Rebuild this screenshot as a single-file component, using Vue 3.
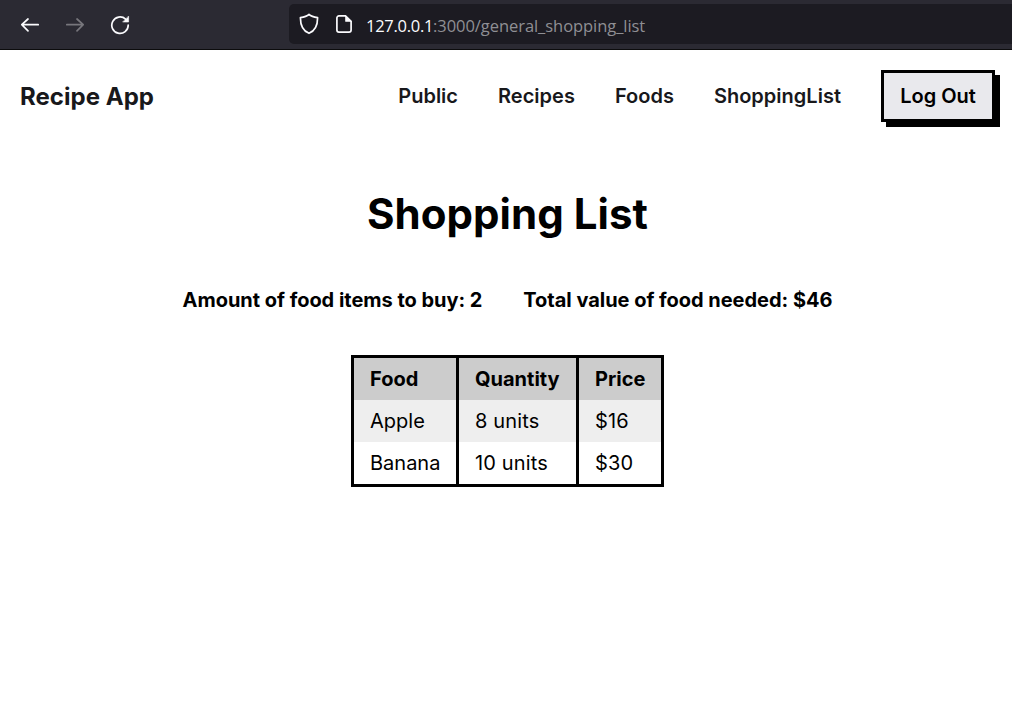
<script setup>
const links = ['Public', 'Recipes', 'Foods', 'ShoppingList']
const items = [
  { food: 'Apple', quantity: '8 units', price: '$16' },
  { food: 'Banana', quantity: '10 units', price: '$30' },
]
</script>

<template>
  <div class="window">
    <div class="toolbar">
      <div class="controls">
        <svg width="20" height="20" viewBox="0 0 20 20" class="icon">
          <path d="M18.2 9.7H2M8 4L1.8 9.7L8 15.8" />
        </svg>
        <svg width="20" height="20" viewBox="0 0 20 20" class="icon dim">
          <path d="M1.8 9.7H18M12 4L18.2 9.7L12 15.8" />
        </svg>
        <svg width="20" height="20" viewBox="0 0 20 20" class="icon">
          <path d="M15.6 4.2A8.2 8.2 0 1 0 18.2 10" />
          <path class="solid" d="M18.6 1.4V7H13Z" />
        </svg>
      </div>
      <div class="address">
        <svg width="20" height="22" viewBox="0 0 20 22" class="icon shield">
          <path d="M10 1.5C7.5 3.7 4.5 4.2 1.4 4.7C1.4 11.4 3.3 17.6 10 20.3C16.7 17.6 18.6 11.4 18.6 4.7C15.5 4.2 12.5 3.7 10 1.5Z" />
        </svg>
        <svg width="16" height="18" viewBox="0 0 16 18" class="icon page">
          <path d="M9.5 .9H3A2.1 2.1 0 0 0 .9 3V15A2.1 2.1 0 0 0 3 17.1H13A2.1 2.1 0 0 0 15.1 15V6.3Z" />
          <path class="solid" d="M9.5 .9V6.4H15.1Z" />
        </svg>
        <span class="url"><b>127.0.0.1</b>:3000/general_shopping_list</span>
      </div>
    </div>

    <header>
      <div class="brand">Recipe App</div>
      <nav>
        <a v-for="link in links" :key="link">{{ link }}</a>
        <button>Log Out</button>
      </nav>
    </header>

    <main>
      <h1>Shopping List</h1>
      <div class="summary">
        <span>Amount of food items to buy: 2</span>
        <span>Total value of food needed: $46</span>
      </div>
      <table>
        <thead>
          <tr><th>Food</th><th>Quantity</th><th>Price</th></tr>
        </thead>
        <tbody>
          <tr v-for="item in items" :key="item.food">
            <td>{{ item.food }}</td><td>{{ item.quantity }}</td><td>{{ item.price }}</td>
          </tr>
        </tbody>
      </table>
    </main>
  </div>
</template>

<style>
body { margin: 0; background: #fff; overflow: hidden; }
</style>

<style scoped>
.window { height: 705px; overflow: hidden; font: 20px/26px Inter, sans-serif; color: #000; }
.toolbar { box-sizing: border-box; height: 50px; display: flex; background: #2b2a33; border-bottom: 1px solid #0c0c0d; }
.controls { width: 289px; display: flex; gap: 25px; padding: 15px 0 0 20px; box-sizing: border-box; }
.icon { flex: none; fill: none; stroke: #fbfbfe; stroke-width: 1.7; stroke-linecap: round; stroke-linejoin: round; }
.dim { stroke: #77767c; }
.solid { fill: #fbfbfe; stroke-width: .6; }
.address { flex: 1; height: 40px; margin-top: 4px; display: flex; align-items: center; background: #1c1b22; border-radius: 5px 0 0 5px; }
.shield { margin-left: 10px; }
.page { margin-left: 17px; }
.url { margin: 3px 0 0 14px; font: 16.5px/24px "Open Sans", "Noto Sans", sans-serif; letter-spacing: -0.06px; color: #8f8f94; white-space: nowrap; }
.url b { font-weight: 400; color: #fbfbfe; letter-spacing: -0.28px; }
header { height: 92px; display: flex; align-items: center; justify-content: space-between; padding: 0 17px 0 20px; color: #18181b; }
.brand { padding-top: 2px; font-size: 24px; font-weight: 700; letter-spacing: 0.03px; }
nav { display: flex; align-items: center; gap: 40px; font-weight: 600; }
nav a { letter-spacing: 0.01px; }
button { box-sizing: border-box; width: 114px; height: 52px; padding: 0; border: 3px solid #000; background: #e9e9ed; color: #000; font: 600 20px/26px Inter, sans-serif; box-shadow: 5px 5px 0 #000; white-space: nowrap; }
main { display: flex; flex-direction: column; align-items: center; padding: 46px 0 0 3px; }
h1 { margin: 0; font-size: 42px; line-height: 52px; font-weight: 700; letter-spacing: 0.04px; }
.summary { display: flex; gap: 41px; margin-top: 47px; font-weight: 700; letter-spacing: -0.03px; }
table { margin-top: 42px; width: 313px; table-layout: fixed; border-collapse: separate; border-spacing: 0; border: 3px solid #000; }
th, td { box-sizing: border-box; height: 42px; padding: 0 16px; text-align: left; font-weight: 400; white-space: nowrap; }
th { font-weight: 700; background: #ccc; }
th + th, td + td { border-left: 3px solid #000; }
td + td { letter-spacing: 0.14px; }
th:nth-child(1) { width: 102px; }
th:nth-child(2) { width: 120px; }
tbody tr:first-child { background: #eee; }
</style>
